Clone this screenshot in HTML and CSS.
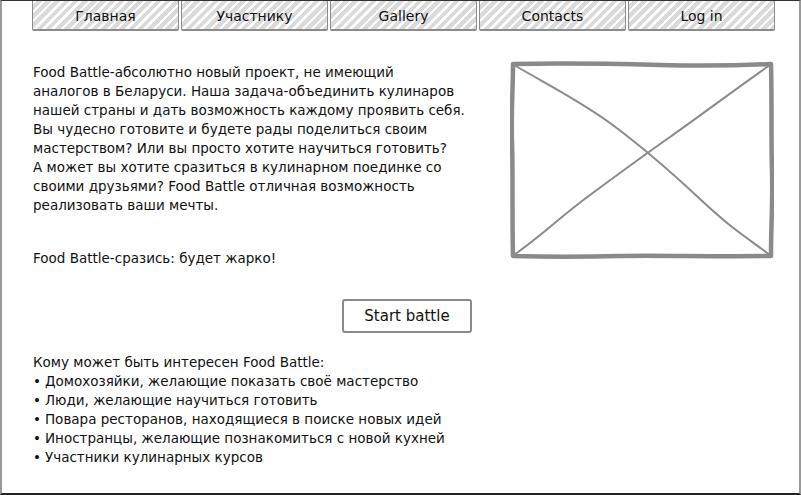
FILE: index.html
```html
<!DOCTYPE html>
<html lang="ru">
<head>
<meta charset="utf-8">
<title>Food Battle</title>
<link rel="stylesheet" href="styles.css">
</head>
<body>
<div class="frame">
  <nav class="nav">
    <a class="tab">Главная</a>
    <a class="tab">Участнику</a>
    <a class="tab">Gallery</a>
    <a class="tab">Contacts</a>
    <a class="tab">Log in</a>
  </nav>
  <main class="content">
    <div class="top-row">
      <div class="intro">
        <p class="text">Food Battle-абсолютно новый проект, не имеющий<br>аналогов в Беларуси. Наша задача-объединить кулинаров<br>нашей страны и дать возможность каждому проявить себя.<br>Вы чудесно готовите и будете рады поделиться своим<br>мастерством? Или вы просто хотите научиться готовить?<br>А может вы хотите сразиться в кулинарном поединке со<br>своими друзьями? Food Battle отличная возможность<br>реализовать ваши мечты.</p>
        <p class="text slogan">Food Battle-сразись: будет жарко!</p>
      </div>
      <div class="image">
        <svg width="264" height="198" viewBox="0 0 264 198">
          <path d="M3 3 C 60 2, 110 3, 150 4 S 220 5, 261 3 C 262 40, 261 80, 262 110 S 261 160, 261 195 C 200 196, 150 194, 110 195 S 40 196, 3 195 C 2 150, 3 110, 2 80 S 3 30, 3 3 Z" fill="none" stroke="#8a8a8a" stroke-width="4.5" stroke-linejoin="round"/>
          <path d="M4 4 C 40 25, 70 40, 100 62 S 160 110, 190 138 S 230 172, 260 194" fill="none" stroke="#8a8a8a" stroke-width="2"/>
          <path d="M260 4 C 220 32, 190 55, 160 76 S 110 112, 80 134 S 35 172, 4 194" fill="none" stroke="#8a8a8a" stroke-width="2"/>
        </svg>
      </div>
    </div>
    <button class="btn">Start battle</button>
    <div class="audience">
      <p class="text">Кому может быть интересен Food Battle:</p>
      <ul class="list">
        <li>Домохозяйки, желающие показать своё мастерство</li>
        <li>Люди, желающие научиться готовить</li>
        <li>Повара ресторанов, находящиеся в поиске новых идей</li>
        <li>Иностранцы, желающие познакомиться с новой кухней</li>
        <li>Участники кулинарных курсов</li>
      </ul>
    </div>
  </main>
</div>
</body>
</html>
```

FILE: styles.css
```css
* { box-sizing: border-box; }
html, body { margin: 0; padding: 0; background: #fff; }
body {
  font-family: "DejaVu Sans", "Noto Sans", sans-serif;
  font-size: 13.5px;
  color: #111;
}
.frame {
  width: 801px;
  height: 495px;
  border-top: 1px solid #333;
  border-left: 2px solid #9a9a9a;
  border-right: 2px solid #9a9a9a;
  border-bottom: 2px solid #222;
  overflow: hidden;
}
.nav {
  display: flex;
  gap: 2px;
  padding-left: 30px;
  margin-top: -1px;
}
.tab {
  width: 147px;
  height: 31px;
  display: flex;
  align-items: center;
  justify-content: center;
  border: 1.5px solid #8c8c8c;
  border-bottom-width: 2px;
  border-radius: 2px;
  background: repeating-linear-gradient(135deg, #fff 0 2.5px, #dadada 2.5px 6.5px);
  font-size: 14px;
  color: #111;
  padding-top: 1px;
}
.content {
  padding-left: 31px;
}
.top-row {
  display: flex;
  margin-top: 32px;
}
.intro {
  width: 477px;
  white-space: nowrap;
}
.text {
  margin: 0;
  line-height: 19px;
}
.slogan {
  margin-top: 34px;
}
.image {
  margin-top: -2px;
}
.image svg { display: block; }
.btn {
  display: block;
  margin: 31px 0 0 309px;
  width: 130px;
  height: 34px;
  background: #fff;
  border: 2px solid #8a8a8a;
  border-radius: 3px;
  font-family: inherit;
  font-size: 15px;
  color: #111;
  padding: 0;
}
.audience {
  margin-top: 20px;
}
.list {
  list-style: none;
  margin: 0;
  padding: 0;
}
.list li {
  line-height: 19px;
}
.list li::before {
  content: "•";
  margin-right: 4px;
}
```
